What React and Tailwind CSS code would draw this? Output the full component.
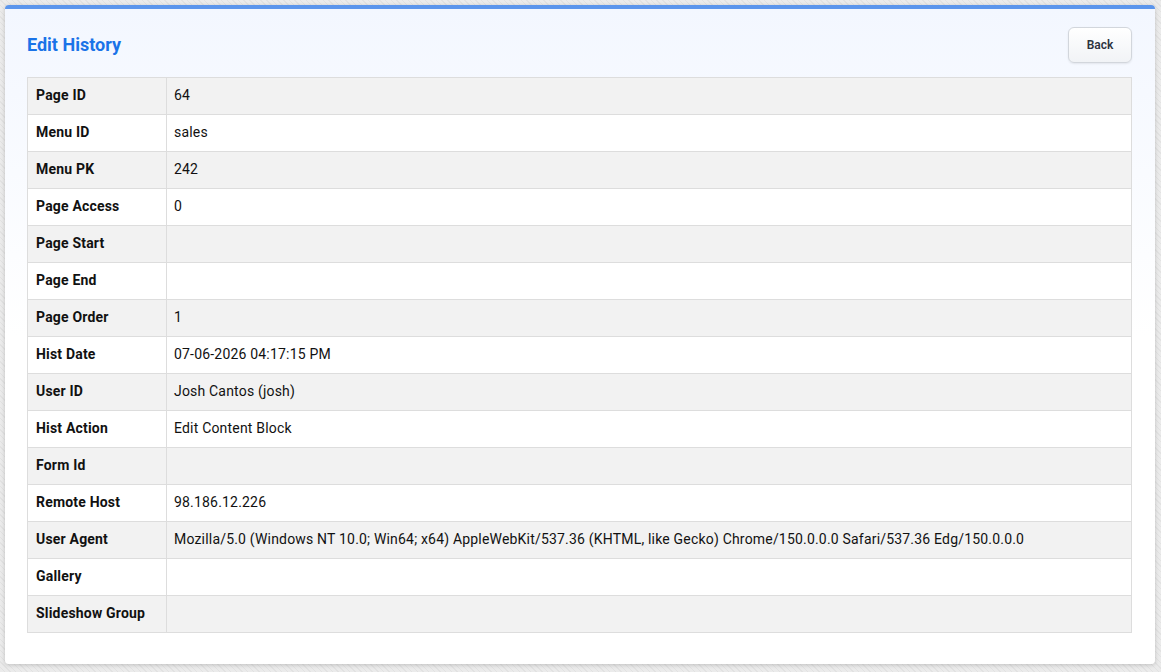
import React from "react";

const rows = [
  ["Page ID", "64"],
  ["Menu ID", "sales"],
  ["Menu PK", "242"],
  ["Page Access", "0"],
  ["Page Start", ""],
  ["Page End", ""],
  ["Page Order", "1"],
  ["Hist Date", "07-06-2026 04:17:15 PM"],
  ["User ID", "Josh Cantos (josh)"],
  ["Hist Action", "Edit Content Block"],
  ["Form Id", ""],
  ["Remote Host", "98.186.12.226"],
  [
    "User Agent",
    "Mozilla/5.0 (Windows NT 10.0; Win64; x64) AppleWebKit/537.36 (KHTML, like Gecko) Chrome/150.0.0.0 Safari/537.36 Edg/150.0.0.0",
  ],
  ["Gallery", ""],
  ["Slideshow Group", ""],
];

export default function App() {
  return (
    <div
      className="w-[1161px] h-[672px] overflow-hidden bg-[#e6e6e6] bg-[repeating-linear-gradient(45deg,#ebebeb_0px,#ebebeb_3px,#e2e2e2_3px,#e2e2e2_4px)] pt-[5px] pl-[5px] pr-[6px]"
      style={{ fontFamily: "Roboto, 'Liberation Sans', sans-serif" }}
    >
      <div className="rounded-[4px] border-t-4 border-[#5b95ec] bg-gradient-to-b from-[#f3f7ff] via-white to-white shadow-[0_1px_4px_rgba(0,0,0,0.18)] pl-[22px] pr-[23px] pt-[18px] pb-[31px]">
        <div className="flex items-center justify-between h-[36px]">
          <h1 className="text-[18px] font-bold text-[#1a73e8] leading-none">
            Edit History
          </h1>
          <button className="w-[64px] h-[36px] rounded-[6px] border border-[#d2d6dc] bg-gradient-to-b from-white to-[#f1f3f6] text-[12px] font-semibold text-[#2d3340] shadow-[0_1px_2px_rgba(0,0,0,0.08)]">
            Back
          </button>
        </div>
        <table className="mt-[14px] w-full border-collapse text-[14px] tracking-[0.19px] text-[#111]">
          <tbody>
            {rows.map(([k, v], i) => (
              <tr
                key={k}
                className={i % 2 === 0 ? "bg-[#f2f2f2]" : "bg-white"}
              >
                <td className="w-[139px] h-[37px] border border-[#dddddd] px-[8px] pb-[2px] font-bold">
                  {k}
                </td>
                <td className="h-[37px] border border-[#dddddd] px-[7px] pb-[2px]">
                  {v}
                </td>
              </tr>
            ))}
          </tbody>
        </table>
      </div>
    </div>
  );
}
